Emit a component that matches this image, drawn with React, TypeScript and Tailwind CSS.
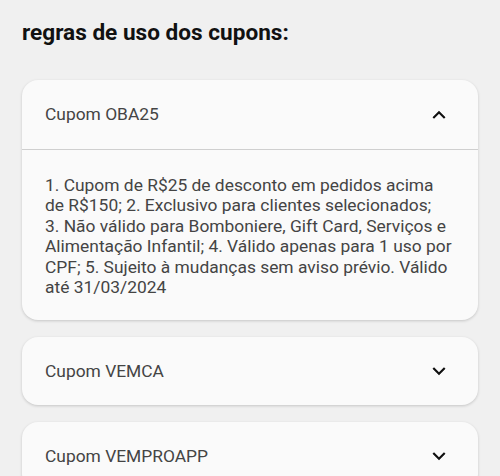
import { useState } from "react";

const cupons = [
  {
    code: "OBA25",
    rules:
      "1. Cupom de R$25 de desconto em pedidos acima de R$150; 2. Exclusivo para clientes selecionados;\n3. Não válido para Bomboniere, Gift Card, Serviços e Alimentação Infantil; 4. Válido apenas para 1 uso por CPF; 5. Sujeito à mudanças sem aviso prévio. Válido até 31/03/2024",
  },
  { code: "VEMCA", rules: "" },
  { code: "VEMPROAPP", rules: "" },
];

function Chevron({ up }: { up: boolean }) {
  return (
    <svg width="26" height="26" viewBox="0 0 24 24" fill="#111">
      {up ? (
        <path d="M12 8l-6 6 1.41 1.41L12 10.83l4.59 4.58L18 14z" />
      ) : (
        <path d="M16.59 8.59L12 13.17 7.41 8.59 6 10l6 6 6-6z" />
      )}
    </svg>
  );
}

export default function App() {
  const [open, setOpen] = useState<string | null>("OBA25");

  return (
    <div className="min-h-screen bg-[#f0f0f0] px-[22px] pt-[20px] font-['Roboto',sans-serif]">
      <h2 className="text-[22.6px] font-bold leading-[26px] text-[#111]">regras de uso dos cupons:</h2>

      <div className="mt-[34px] flex flex-col gap-[17px]">
        {cupons.map((c) => {
          const isOpen = open === c.code;
          return (
            <div key={c.code} className="overflow-hidden rounded-[16px] bg-[#fafafa] shadow-[0_1px_3px_rgba(0,0,0,0.18)]">
              <button
                className={
                  "flex w-full items-center justify-between pl-[23px] pr-[26px] text-left " +
                  (isOpen ? "h-[69px]" : "h-[68px]")
                }
                onClick={() => setOpen(isOpen ? null : c.code)}
              >
                <span className="text-[17.4px] text-[#444]">Cupom {c.code}</span>
                <Chevron up={isOpen} />
              </button>
              {isOpen && (
                <div className="whitespace-pre-line border-t border-[#cfcfcf] pb-[23px] pl-[23px] pr-[22px] pt-[25px] text-[17.4px] leading-[20.4px] text-[#444]">
                  {c.rules}
                </div>
              )}
            </div>
          );
        })}
      </div>
    </div>
  );
}
